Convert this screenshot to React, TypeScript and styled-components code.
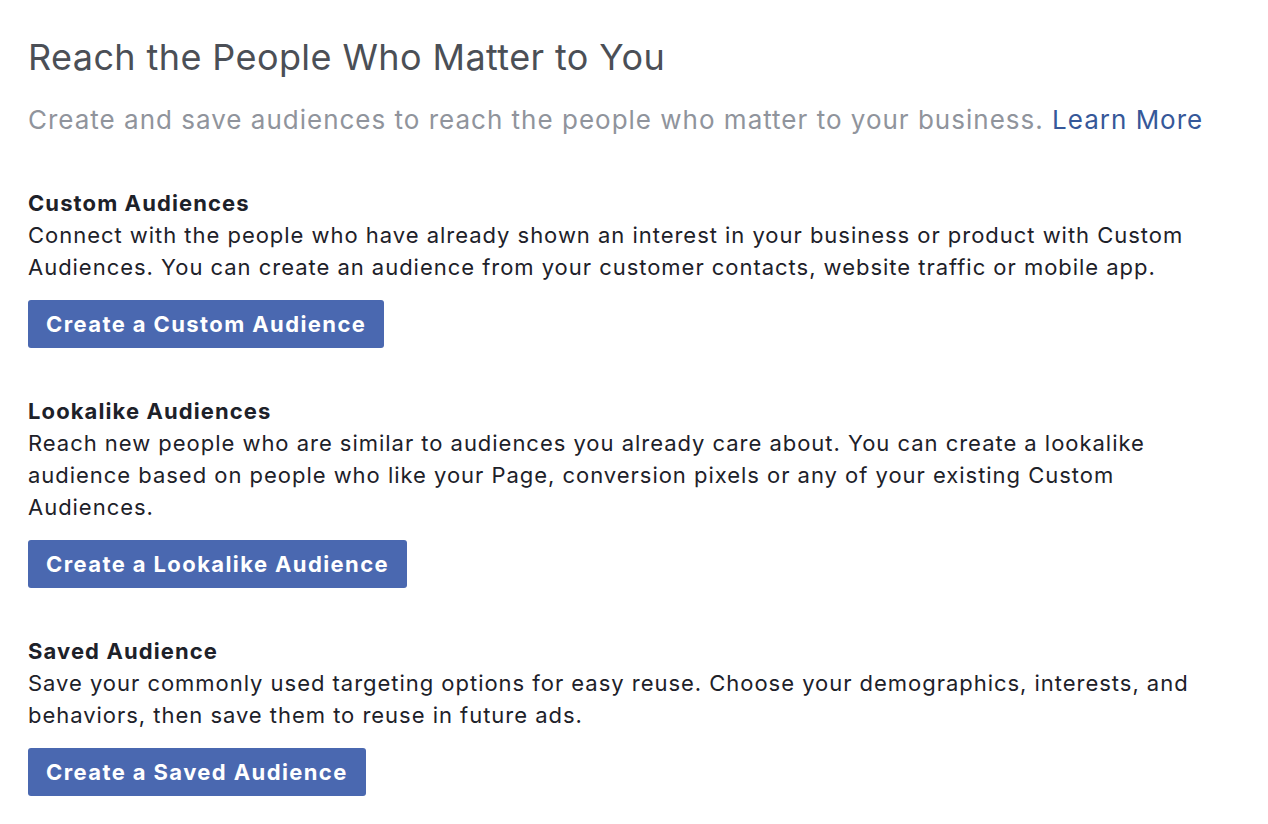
import React from "react";
import styled, { createGlobalStyle } from "styled-components";

const Global = createGlobalStyle`
  html, body { margin: 0; padding: 0; background: #ffffff; }
  body { font-family: Inter, "Noto Sans", "Liberation Sans", sans-serif; -webkit-font-smoothing: antialiased; }
`;

const Page = styled.main`
  width: 1200px;
  padding: 30px 28px 20px 28px;
  display: flex;
  flex-direction: column;
`;

const Title = styled.h1`
  margin: 0;
  font-size: 36px;
  line-height: 54px;
  font-weight: 400;
  color: #4b4f56;
  letter-spacing: 0.4px;
`;

const Subtitle = styled.p`
  margin: 16px 0 0 0;
  font-size: 26px;
  line-height: 40px;
  font-weight: 400;
  color: #90949c;
  letter-spacing: 1px;
`;

const LearnLink = styled.a`
  color: #365899;
  text-decoration: none;
  cursor: pointer;
`;

const Sections = styled.div`
  display: flex;
  flex-direction: column;
  gap: 47px;
  margin-top: 47px;
`;

const Section = styled.section`
  display: flex;
  flex-direction: column;
  align-items: flex-start;
`;

const Heading = styled.h2`
  margin: 0;
  font-size: 22px;
  line-height: 32px;
  font-weight: 700;
  color: #1d2129;
  letter-spacing: 1.1px;
`;

const Body = styled.p`
  margin: 0;
  font-size: 22px;
  line-height: 32px;
  font-weight: 400;
  color: #1d2129;
  letter-spacing: 0.97px;
`;

const Button = styled.button`
  margin-top: 17px;
  height: 48px;
  padding: 0 18px;
  border: none;
  border-radius: 3px;
  background: #4a68b0;
  color: #ffffff;
  font-family: inherit;
  font-size: 22px;
  font-weight: 700;
  letter-spacing: 1.4px;
  cursor: pointer;
`;

const sections = [
  {
    title: "Custom Audiences",
    text: "Connect with the people who have already shown an interest in your business or product with Custom Audiences. You can create an audience from your customer contacts, website traffic or mobile app.",
    button: "Create a Custom Audience",
  },
  {
    title: "Lookalike Audiences",
    text: "Reach new people who are similar to audiences you already care about. You can create a lookalike audience based on people who like your Page, conversion pixels or any of your existing Custom Audiences.",
    button: "Create a Lookalike Audience",
  },
  {
    title: "Saved Audience",
    text: "Save your commonly used targeting options for easy reuse. Choose your demographics, interests, and behaviors, then save them to reuse in future ads.",
    button: "Create a Saved Audience",
  },
];

export default function App() {
  return (
    <>
      <Global />
      <Page>
        <Title>Reach the People Who Matter to You</Title>
        <Subtitle>
          Create and save audiences to reach the people who matter to your business.{" "}
          <LearnLink>Learn More</LearnLink>
        </Subtitle>
        <Sections>
          {sections.map((s) => (
            <Section key={s.title}>
              <Heading>{s.title}</Heading>
              <Body>{s.text}</Body>
              <Button>{s.button}</Button>
            </Section>
          ))}
        </Sections>
      </Page>
    </>
  );
}
